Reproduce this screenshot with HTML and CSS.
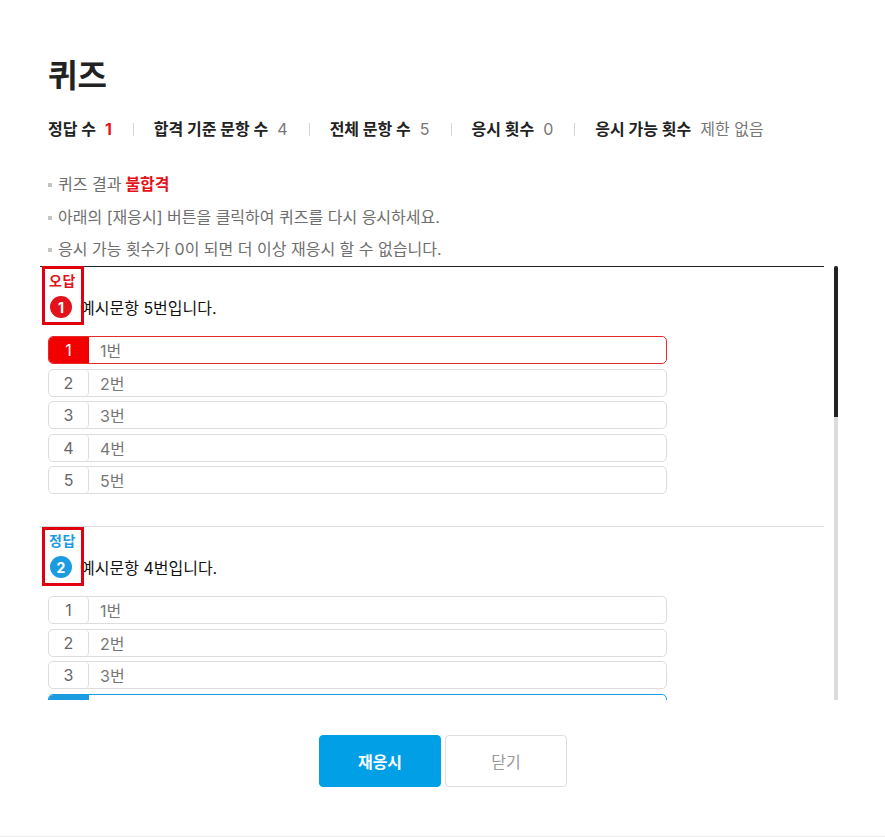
FILE: index.html
```html
<!DOCTYPE html>
<html lang="ko">
<head>
<meta charset="utf-8">
<title>퀴즈</title>
<link rel="stylesheet" href="styles.css">
</head>
<body>
<div class="popup">
  <div class="head">
    <h1 class="title">퀴즈</h1>
    <ul class="stats">
      <li class="stat"><span class="stat-label">정답 수</span><span class="stat-val red">1</span></li>
      <li class="stat"><span class="stat-label">합격 기준 문항 수</span><span class="stat-val">4</span></li>
      <li class="stat"><span class="stat-label">전체 문항 수</span><span class="stat-val">5</span></li>
      <li class="stat"><span class="stat-label">응시 횟수</span><span class="stat-val">0</span></li>
      <li class="stat"><span class="stat-label">응시 가능 횟수</span><span class="stat-val">제한 없음</span></li>
    </ul>
    <ul class="notes">
      <li>퀴즈 결과 <strong class="fail">불합격</strong></li>
      <li>아래의 [재응시] 버튼을 클릭하여 퀴즈를 다시 응시하세요.</li>
      <li>응시 가능 횟수가 0이 되면 더 이상 재응시 할 수 없습니다.</li>
    </ul>
  </div>

  <div class="quiz-area">
    <div class="quiz-viewport">
      <ol class="quiz-list">
        <li class="q wrong">
          <span class="mark"></span>
          <div class="q-result">오답</div>
          <div class="q-title"><span class="q-num">1</span><span class="q-text">예시문항 5번입니다.</span></div>
          <ul class="opts">
            <li class="opt picked"><span class="opt-num">1</span><span class="opt-text">1번</span></li>
            <li class="opt"><span class="opt-num">2</span><span class="opt-text">2번</span></li>
            <li class="opt"><span class="opt-num">3</span><span class="opt-text">3번</span></li>
            <li class="opt"><span class="opt-num">4</span><span class="opt-text">4번</span></li>
            <li class="opt"><span class="opt-num">5</span><span class="opt-text">5번</span></li>
          </ul>
        </li>
        <li class="q right">
          <span class="mark"></span>
          <div class="q-result">정답</div>
          <div class="q-title"><span class="q-num">2</span><span class="q-text">예시문항 4번입니다.</span></div>
          <ul class="opts">
            <li class="opt"><span class="opt-num">1</span><span class="opt-text">1번</span></li>
            <li class="opt"><span class="opt-num">2</span><span class="opt-text">2번</span></li>
            <li class="opt"><span class="opt-num">3</span><span class="opt-text">3번</span></li>
            <li class="opt picked"><span class="opt-num">4</span><span class="opt-text">4번</span></li>
            <li class="opt"><span class="opt-num">5</span><span class="opt-text">5번</span></li>
          </ul>
        </li>
      </ol>
    </div>
    <div class="scrollbar"><div class="thumb"></div></div>
  </div>

  <div class="actions">
    <button class="btn btn-primary" type="button">재응시</button>
    <button class="btn btn-line" type="button">닫기</button>
  </div>
</div>
</body>
</html>
```

FILE: styles.css
```css
* { box-sizing: border-box; }
html, body {
  margin: 0;
  padding: 0;
  background: #fff;
}
body {
  font-family: Inter, "Noto Sans CJK KR", sans-serif;
  color: #222;
}
ul, ol { list-style: none; margin: 0; padding: 0; }

.popup {
  height: 837px;
  padding: 0 47px 0 40px;
  border-bottom: 1px solid #ececec;
  display: flex;
  flex-direction: column;
}

.head { padding-left: 8px; }

.title {
  margin: 56px 0 0;
  font-size: 32px;
  line-height: 40px;
  font-weight: 700;
  color: #222;
}

.stats {
  margin-top: 22px;
  display: flex;
  align-items: center;
  font-size: 16px;
  line-height: 22px;
}
.stat { display: flex; align-items: center; }
.stat + .stat::before {
  content: "";
  width: 1px;
  height: 13px;
  background: #d6d6d6;
  margin: 0 20px 0 21px;
}
.stat-label { font-weight: 700; color: #222; }
.stat-val { margin-left: 9px; color: #777; }
.stat-val.red { color: #e3121b; font-weight: 700; }

.notes {
  margin-top: 28px;
  font-size: 16px;
  line-height: 32.67px;
  color: #6e6e6e;
}
.notes li {
  display: flex;
  align-items: center;
}
.notes li::before {
  content: "";
  width: 4px;
  height: 4px;
  background: #c4c4c4;
  margin-right: 6px;
  margin-top: 1px;
}
.fail { color: #e3121b; font-weight: 700; margin-left: 4px; }

.quiz-area {
  height: 434px;
  display: flex;
}
.quiz-viewport {
  flex: 1;
  overflow: hidden;
  margin-right: 10px;
}
.scrollbar {
  width: 4px;
  flex: none;
  background: #dcdcdc;
}
.thumb {
  height: 151px;
  background: #222;
  border-radius: 2px 2px 0 0;
}

.quiz-list {
  border-top: 1px solid #222;
}

.q {
  position: relative;
  padding: 5px 8px 32px;
  border-bottom: 1px solid #ddd;
}
.mark {
  position: absolute;
  left: 2px;
  top: -1px;
  width: 42px;
  height: 59px;
  border: 3px solid #e0000f;
  z-index: 2;
  pointer-events: none;
}
.q.right .mark { top: 0; }

.q-result {
  font-size: 14px;
  line-height: 18px;
  font-weight: 700;
  padding-left: 1px;
  letter-spacing: 0.5px;
}
.q.wrong .q-result { color: #e3121b; }
.q.right .q-result { color: #1b9ce0; }

.q-title {
  margin-top: 5px;
  height: 24px;
  display: flex;
  align-items: center;
}
.q-num {
  width: 22px;
  height: 22px;
  margin-left: 2px;
  border-radius: 50%;
  color: #fff;
  font-size: 14px;
  font-weight: 700;
  display: flex;
  align-items: center;
  justify-content: center;
}
.q.wrong .q-num { background: #e3121b; }
.q.right .q-num { background: #1b9ce0; }
.q-text {
  margin-left: 8px;
  font-size: 16px;
  font-weight: 400;
  color: #111;
}

.opts {
  margin-top: 17px;
  width: 619px;
  display: flex;
  flex-direction: column;
  gap: 4.5px;
}
.opt {
  height: 28px;
  display: flex;
  align-items: center;
  border: 1px solid #ddd;
  border-radius: 5px;
  font-size: 16px;
  overflow: hidden;
}
.opt-num {
  width: 40px;
  height: 100%;
  flex: none;
  display: flex;
  align-items: center;
  justify-content: center;
  border-right: 1px solid #ddd;
  border-radius: 4px;
  color: #666;
}
.opt-text {
  padding-left: 11px;
  color: #777;
}
.q.wrong .opt.picked { border-color: #e42a2a; }
.q.wrong .opt.picked .opt-num { background: #f20000; border-color: #f20000; color: #fff; border-radius: 4px 0 0 4px; }
.q.right .opt.picked { border-color: #1b9ce0; }
.q.right .opt.picked .opt-num { background: #1b9ce0; border-color: #1b9ce0; color: #fff; border-radius: 4px 0 0 4px; }

.actions {
  margin-top: 35px;
  display: flex;
  justify-content: center;
  gap: 4px;
  padding-left: 8px;
}
.btn {
  width: 122px;
  height: 52px;
  border-radius: 4px;
  font-family: Inter, "Noto Sans CJK KR", sans-serif;
  font-size: 16px;
  cursor: pointer;
}
.btn-primary {
  background: #009fe6;
  border: 1px solid #009fe6;
  color: #fff;
  font-weight: 700;
}
.btn-line {
  background: #fff;
  border: 1px solid #ddd;
  color: #999;
}
```
